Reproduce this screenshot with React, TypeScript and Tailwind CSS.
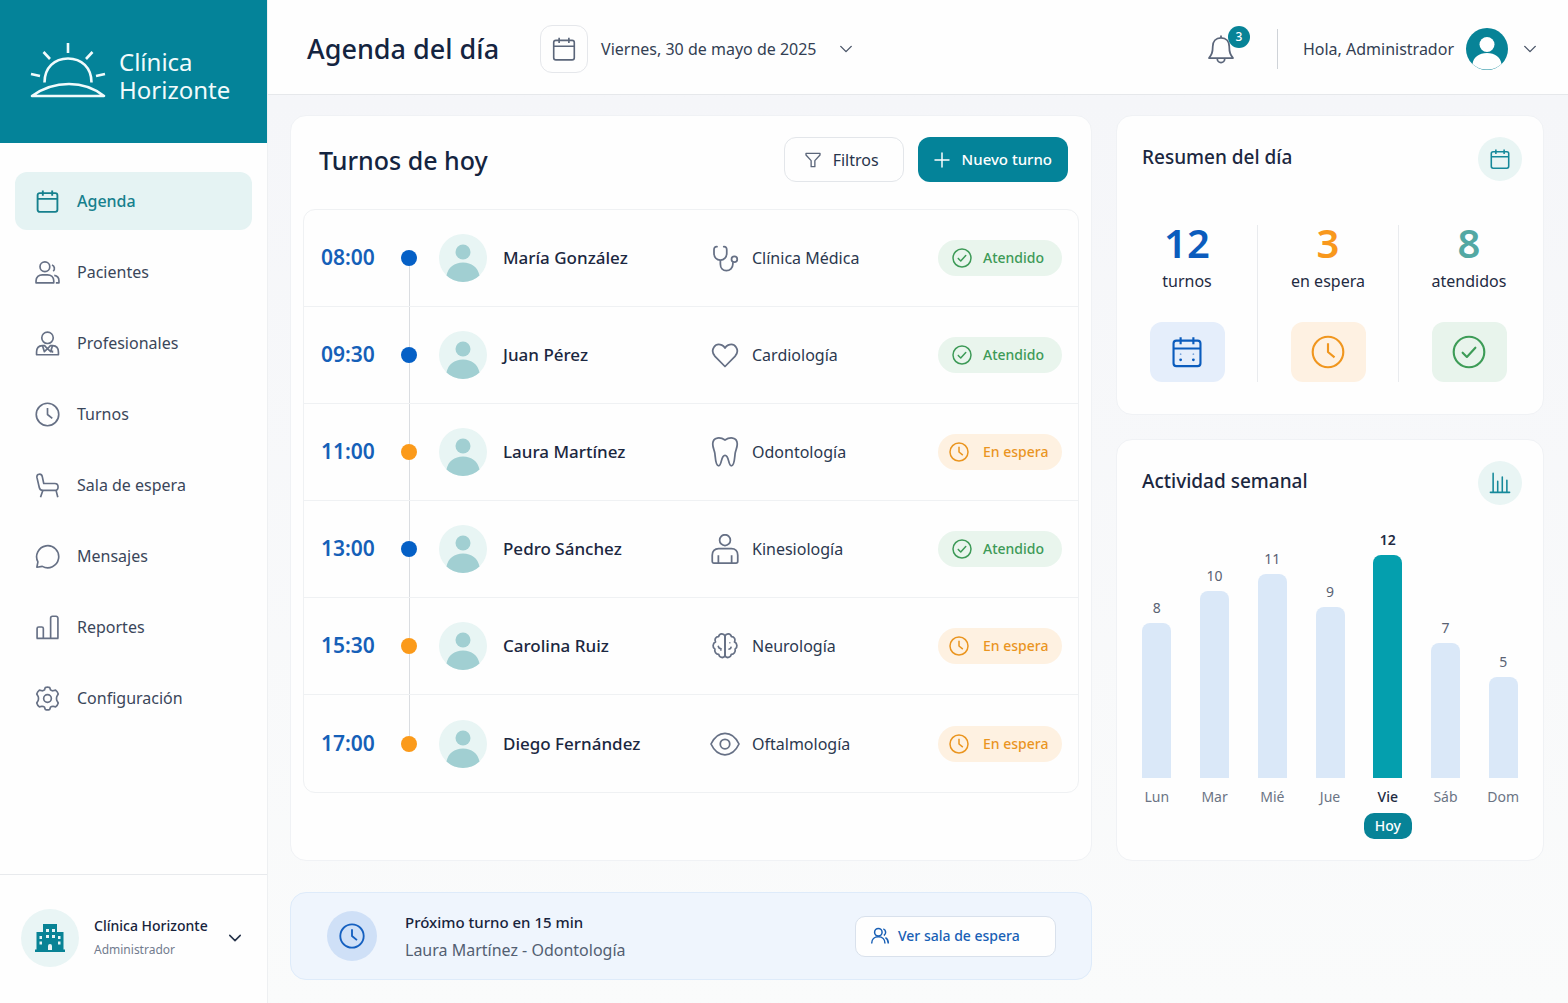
import type { ReactNode } from 'react'
import clsx from 'clsx'

type Status = 'atendido' | 'espera'

const icons: Record<string, ReactNode> = {
  calendar: (
    <>
      <rect x="2.5" y="4" width="19" height="18" rx="2" />
      <path d="M2.5 9.5h19M7.5 1.5v5M16.5 1.5v5" />
    </>
  ),
  calendarDots: (
    <>
      <rect x="2.5" y="4" width="19" height="18" rx="2" />
      <path d="M2.5 9.5h19M7.5 1.5v5M16.5 1.5v5" />
      <path d="M7.5 13.5h.01M16.5 13.5h.01" strokeWidth="1.2" opacity=".5" strokeLinecap="round" />
      <path d="M7.5 17.5h.01M16.5 17.5h.01" strokeWidth="2" strokeLinecap="round" />
    </>
  ),
  users: (
    <>
      <circle cx="9.5" cy="6.5" r="4.7" />
      <path d="M1 22v-2c0-3.6 2.7-5.8 6-5.8h5c3.3 0 6 2.2 6 5.8v2z" />
      <path d="M16.3 4.8a3.6 3.6 0 0 1 1.2 6M18.5 14.8c2.7.4 4.5 2.3 4.5 5.2v2h-3" />
    </>
  ),
  waiting: (
    <>
      <circle cx="10" cy="7.5" r="4.5" />
      <path d="M2 21c0-5 3.3-8 8-8s8 3 8 8M16 3.5c3.5 1.3 3.7 6.2.6 7.9M18.5 14c2.3 1.3 3.5 3.7 3.5 7" />
    </>
  ),
  doctor: (
    <>
      <circle cx="12" cy="6.5" r="5.5" />
      <path d="M1.5 22.8v-2.600c0-3.700 2.200-6 5.500-6.200l2.200 0 2.800 3 2.800-3 2.200 0c3.300.2 5.500 2.500 5.500 6.200v2.600z" />
      <path d="M7.200 14.200l1.800 5.600 3-2.800 3 2.800 1.800-5.600M16.700 18.800v2" />
    </>
  ),
  clock: (
    <>
      <circle cx="12" cy="12" r="10.8" />
      <path d="M12 5.800V12l4.600 3.800" />
    </>
  ),
  chair: (
    <>
      <path d="M1.800 4C1.600.4 6.300.2 7 3.500l1.400 6.600H19c4.200 0 4.200 6.600 0 6.600H7.600c-2 0-3.100-1-3.500-2.800z" />
      <path d="M7.500 16.700l-2.200 6.600M20.200 16.700l1.700 6.600" />
    </>
  ),
  chat: <path d="M1.800 22.300l1-5.100A10.600 10.600 0 1 1 7 21.500z" />,
  bars: <path d="M1.500 22.500h21M2 22.500V13a1.500 1.500 0 0 1 1.500-1.500h3A1.500 1.500 0 0 1 8 13v9.500M15 22.500V3a1.800 1.800 0 0 1 1.800-1.800h3.400A1.800 1.800 0 0 1 22 3v19.500" />,
  gear: (
    <>
      <circle cx="12" cy="12" r="3.7" />
      <path d="M9.900 1.500q2.100-1 4.200 0l.8 2.200q1 .9 2.300.9l2.600-.6q1.900 1.400 2.500 3.700l-1.400 2.500q-.5 1.800 0 3.600l1.400 2.500q-.6 2.300-2.500 3.700l-2.600-.6q-1.300 0-2.300.9l-.8 2.200q-2.100 1-4.200 0l-.8-2.200q-1-.9-2.300-.9l-2.600.6q-1.900-1.400-2.500-3.700l1.400-2.500q.5-1.800 0-3.600L1.700 7.700q.6-2.300 2.500-3.700l2.600.6q1.300 0 2.300-.9z" />
    </>
  ),
  chevron: <path d="M3 7.500l9 9 9-9" strokeLinecap="round" />,
  bell: <path d="M12 3.200V1.200M12 3c-4.200 0-6.600 3-6.600 7 0 5-1 6.500-3 9.200h19.200c-2-2.700-3-4.200-3-9.200 0-4-2.400-7-6.600-7zM9 19.500a3 3.300 0 0 0 6 0" />,
  filter: <path d="M1.500 2h21v2.500L14.800 13v9H9.200v-9L1.500 4.500z" />,
  plus: <path d="M12 1.500v21M1.500 12h21" strokeLinecap="round" />,
  check: (
    <>
      <circle cx="12" cy="12" r="10.8" />
      <path d="M7.500 12.500l3 3 6-6.500" strokeLinecap="round" />
    </>
  ),
  chart: <path d="M1.500 22.200h21M4.500 22V1.500M9.500 22V10M14.500 22V5.500M19.500 22V9" strokeLinecap="round" />,
  stethoscope: (
    <>
      <path d="M6.200 3c-2.400-.4-3 .8-3 2.400v2.700c0 3.300 2.100 5.500 5.100 5.500s5.100-2.200 5.100-5.500V5.400c0-1.600-.6-2.800-3-2.400" />
      <path d="M8.300 13.600v3.200c0 3.200 2 5.300 4.800 5.300s5.200-2.100 5.200-5.300v-1.500" />
      <circle cx="19.500" cy="13" r="2.300" />
    </>
  ),
  heart: <path d="M12 21.200L4 13.100C-.4 8 4.200 1.700 9.500 4.100c1.100.5 1.900 1.300 2.500 2.300.6-1 1.400-1.800 2.500-2.300C19.800 1.700 24.400 8 20 13.100z" />,
  tooth: <path d="M12 2.400C8.500.1 2.400-.3 2.200 5.400c-.1 3 1.300 4.900 1.700 7.800.4 3.200.5 9.700 2.900 9.800 2.900.1 1.700-8.400 5.200-8.400s2.300 8.500 5.200 8.400c2.400-.1 2.500-6.600 2.900-9.800.4-2.900 1.800-4.800 1.700-7.800-.2-5.700-6.300-5.300-9.800-3z" />,
  body: (
    <>
      <circle cx="12" cy="4.900" r="4.300" />
      <path d="M6.800 11.700h10.400c3 0 5 2.200 5 5.200v4.900c0 .9-.5 1.400-1.400 1.400H3.200c-.9 0-1.400-.5-1.400-1.400v-4.900c0-3 2-5.200 5-5.200zM6.700 23v-6M17.300 23v-6" />
    </>
  ),
  brain: (
    <>
      <path d="M12 4c-.9-2.300-4.500-2.200-5.100.4-2.500 0-3.500 2.500-2.500 4.300-2.400 1.100-2.500 4.600-.5 5.700-.5 2.300.9 4.200 3.100 4.300.6 2.900 4.100 3.300 5 1z" />
      <path d="M12 4c.9-2.300 4.500-2.200 5.100.4 2.500 0 3.500 2.500 2.500 4.300 2.400 1.100 2.500 4.600.5 5.700.5 2.300-.9 4.200-3.100 4.300-.6 2.900-4.100 3.300-5 1z" />
      <path d="M6.500 11.800c.3 1.700 1.400 2.500 2.900 2.300M8.700 14.200v1.600M17 12.500c-.2 1.400-1 2.100-2.300 2.100M15.500 9.400h.8" strokeWidth="1.200" />
    </>
  ),
  eye: (
    <>
      <path d="M.8 12C3 7.300 7 3.400 12 3.400S21 7.300 23.200 12C21 16.700 17 20.600 12 20.600S3 16.700.8 12z" />
      <circle cx="12" cy="12" r="3.8" />
    </>
  ),
}

function Icon({ name, className, stroke = 1.5 }: { name: string; className?: string; stroke?: number }) {
  return (
    <svg
      viewBox="0 0 24 24"
      fill="none"
      stroke="currentColor"
      strokeWidth={stroke}
      strokeLinejoin="round"
      className={clsx('shrink-0', className)}
      aria-hidden="true"
    >
      {icons[name]}
    </svg>
  )
}

const nav = [
  { label: 'Agenda', icon: 'calendar' },
  { label: 'Pacientes', icon: 'users' },
  { label: 'Profesionales', icon: 'doctor' },
  { label: 'Turnos', icon: 'clock' },
  { label: 'Sala de espera', icon: 'chair' },
  { label: 'Mensajes', icon: 'chat' },
  { label: 'Reportes', icon: 'bars' },
  { label: 'Configuración', icon: 'gear' },
]

const turnos: { hora: string; paciente: string; especialidad: string; icon: string; status: Status }[] = [
  { hora: '08:00', paciente: 'María González', especialidad: 'Clínica Médica', icon: 'stethoscope', status: 'atendido' },
  { hora: '09:30', paciente: 'Juan Pérez', especialidad: 'Cardiología', icon: 'heart', status: 'atendido' },
  { hora: '11:00', paciente: 'Laura Martínez', especialidad: 'Odontología', icon: 'tooth', status: 'espera' },
  { hora: '13:00', paciente: 'Pedro Sánchez', especialidad: 'Kinesiología', icon: 'body', status: 'atendido' },
  { hora: '15:30', paciente: 'Carolina Ruiz', especialidad: 'Neurología', icon: 'brain', status: 'espera' },
  { hora: '17:00', paciente: 'Diego Fernández', especialidad: 'Oftalmología', icon: 'eye', status: 'espera' },
]

const resumen = [
  { value: 12, label: 'turnos', icon: 'calendarDots', color: 'text-[#0b5cbd]', tile: 'bg-[#e5eefb] text-[#0b5cbd]' },
  { value: 3, label: 'en espera', icon: 'clock', color: 'text-[#f8981d]', tile: 'bg-[#fef1e2] text-[#f0961e]' },
  { value: 8, label: 'atendidos', icon: 'check', color: 'text-[#53a8a3]', tile: 'bg-[#e8f4ec] text-[#3d9c57]' },
]

const semana = [
  { day: 'Lun', count: 8, height: 155 },
  { day: 'Mar', count: 10, height: 187 },
  { day: 'Mié', count: 11, height: 204 },
  { day: 'Jue', count: 9, height: 171 },
  { day: 'Vie', count: 12, height: 223, today: true },
  { day: 'Sáb', count: 7, height: 135 },
  { day: 'Dom', count: 5, height: 101 },
]

function Logo() {
  return (
    <svg viewBox="0 0 76 58" className="w-[76px] h-[58px] shrink-0" fill="none" stroke="currentColor" strokeWidth="2.6" aria-hidden="true">
      <path d="M38 0v10M13.500 9l6.500 7M62.500 9l-6.500 7M1 31l9 2M75 31l-9 2" />
      <path d="M14.500 39.500c0-15 10-24 23.500-24s23.500 9 23.500 24" />
      <path d="M2 53c11-8 23-12 37-12s25 4 35 12z" strokeLinejoin="round" />
    </svg>
  )
}

function Building() {
  return (
    <svg viewBox="0 0 30 28" className="w-[30px] h-7" aria-hidden="true">
      <path fill="#098395" d="M8 0h14v8h6.500v17.500H30V28H0v-2.500h1.500V8H8z" />
      <path
        fill="#e9f5f5"
        d="M11 5h3v3h-3zM17 5h3v3h-3zM11 11h3v3h-3zM17 11h3v3h-3zM4.500 12H7v3H4.500zM4.500 17.500H7v3H4.500zM23 12h2.500v3H23zM23 17.500h2.500v3H23zM13 26v-4a2 2 0 0 1 4 0v4z"
      />
    </svg>
  )
}

function PatientAvatar() {
  return (
    <svg viewBox="0 0 48 48" className="w-12 h-12 shrink-0" aria-hidden="true">
      <circle cx="24" cy="24" r="24" fill="#e8f5f4" />
      <circle cx="24" cy="18" r="7.5" fill="#a1cfd2" />
      <path fill="#a1cfd2" d="M7.500 41.500C9 33.500 15.500 28.500 24 28.500s15 5 16.500 13A24 24 0 0 1 24 48a24 24 0 0 1-16.500-6.500z" />
    </svg>
  )
}

function AdminAvatar() {
  return (
    <svg viewBox="0 0 42 42" className="w-[42px] h-[42px] shrink-0" aria-hidden="true">
      <circle cx="21" cy="21" r="21" fill="#078397" />
      <circle cx="21" cy="16.5" r="7.5" fill="#fff" />
      <path fill="#fff" d="M6.500 36C7.500 29 13 25 21 25s13.500 4 14.500 11A21 21 0 0 1 21 41.500 21 21 0 0 1 6.500 36z" />
    </svg>
  )
}

function StatusBadge({ status }: { status: Status }) {
  const done = status === 'atendido'
  return (
    <span
      className={clsx(
        'flex items-center w-[124px] h-9 rounded-full text-sm font-medium shrink-0',
        done ? 'pl-[14px] gap-[11px] bg-[#e9f5ed] text-[#3d9a57]' : 'pl-[11px] gap-[14px] bg-[#fef1e1] text-[#ea951f]',
      )}
    >
      <Icon name={done ? 'check' : 'clock'} className="w-5 h-5" stroke={1.8} />
      {done ? 'Atendido' : 'En espera'}
    </span>
  )
}

function Sidebar() {
  return (
    <aside className="w-[268px] shrink-0 flex flex-col bg-[#fefefe] border-r border-[#eef0f2]">
      <div className="h-[143px] flex items-center gap-[13px] pl-[30px] bg-[#048399] text-[#f1fbfc]">
        <Logo />
        <p className="text-2xl leading-7 mt-2">
          Clínica
          <br />
          Horizonte
        </p>
      </div>
      <nav className="flex-1 flex flex-col gap-[13px] px-[15px] pt-[29px]">
        {nav.map((item, i) => (
          <a
            key={item.label}
            href="#"
            aria-current={i === 0 ? 'page' : undefined}
            className={clsx(
              'flex items-center gap-[17px] h-[58px] pl-5 rounded-xl text-base',
              i === 0 ? 'bg-[#e5f3f3] text-[#16808d] font-medium' : 'text-[#3a465a] hover:bg-slate-50',
            )}
          >
            <Icon name={item.icon} className={clsx('w-[25px] h-[25px]', i > 0 && 'text-[#667085]')} stroke={i === 0 ? 1.8 : 1.6} />
            {item.label}
          </a>
        ))}
      </nav>
      <button className="flex items-center h-[130px] px-[21px] pb-1 border-t border-[#e8eaed] text-left">
        <span className="grid place-items-center w-[58px] h-[58px] rounded-full bg-[#e9f5f5]">
          <Building />
        </span>
        <span className="flex-1 ml-[15px]">
          <span className="block text-sm leading-6 font-medium text-[#17233c]">Clínica Horizonte</span>
          <span className="block text-xs leading-6 text-[#727c8e]">Administrador</span>
        </span>
        <Icon name="chevron" className="w-[14px] h-[14px] mr-1 text-[#26334a]" stroke={2.6} />
      </button>
    </aside>
  )
}

function Header() {
  return (
    <header className="flex items-center h-[95px] pt-1 pl-[39px] pr-[31px] bg-[#fefefe] border-b border-[#e6e8eb] text-[#333f53]">
      <h1 className="text-[27px] font-medium text-[#142440]">Agenda del día</h1>
      <button className="ml-[41px] flex items-center" aria-label="Cambiar fecha">
        <span className="grid place-items-center w-12 h-12 rounded-xl border border-[#e5e7eb]">
          <Icon name="calendar" className="w-[26px] h-[26px] text-[#5b667a]" stroke={1.5} />
        </span>
        <span className="ml-[13px] mr-[22px] text-base">Viernes, 30 de mayo de 2025</span>
        <Icon name="chevron" className="w-[14px] h-[14px] text-[#4a5568]" stroke={2.4} />
      </button>
      <button className="relative ml-auto" aria-label="Notificaciones">
        <Icon name="bell" className="w-[30px] h-[30px] text-[#5b667a]" stroke={1.4} />
        <span className="absolute -top-2 -right-[14px] grid place-items-center w-[22px] h-[22px] rounded-full bg-[#078397] text-white text-xs font-medium">
          3
        </span>
      </button>
      <span className="w-px h-10 ml-[41px] mr-[25px] bg-[#cfd3d8]" />
      <button className="flex items-center text-base">
        Hola, Administrador
        <span className="ml-3 mr-[15px]">
          <AdminAvatar />
        </span>
        <Icon name="chevron" className="w-[14px] h-[14px] text-[#4a5568]" stroke={2.4} />
      </button>
    </header>
  )
}

function TurnosCard() {
  return (
    <section className="flex-1 px-3 pt-[21px] bg-[#fefefe] rounded-2xl border border-[#f0f2f5]">
      <div className="flex items-center gap-[14px] pl-4 pr-[11px]">
        <h2 className="flex-1 text-[25px] leading-9 font-medium text-[#142440]">Turnos de hoy</h2>
        <button className="flex items-center gap-3 h-[45px] px-5 rounded-xl border border-[#e3e6ea] text-base text-[#28354b]">
          <Icon name="filter" className="w-4 h-4 text-[#5b667a]" stroke={2} />
          <span className="mr-1">Filtros</span>
        </button>
        <button className="flex items-center gap-3 h-[45px] px-4 rounded-xl bg-[#048399] text-[15px] font-medium text-white">
          <Icon name="plus" className="w-4 h-4" stroke={2.2} />
          Nuevo turno
        </button>
      </div>
      <ol className="mt-[27px] rounded-xl border border-[#eff1f3] divide-y divide-[#eff1f3]">
        {turnos.map((t, i) => (
          <li key={t.hora} className="flex items-center h-[97px] pl-[17px] pr-4">
            <time className="w-20 text-[21px] font-semibold text-[#1560b8]">{t.hora}</time>
            <span className="self-stretch flex flex-col items-center w-4 mr-[22px]">
              <span className={clsx('flex-1 w-px', i > 0 && 'bg-[#dadde1]')} />
              <span className={clsx('w-4 h-4 rounded-full', t.status === 'atendido' ? 'bg-[#0560c6]' : 'bg-[#fb9a1a]')} />
              <span className={clsx('flex-1 w-px', i < turnos.length - 1 && 'bg-[#dadde1]')} />
            </span>
            <PatientAvatar />
            <span className="w-[207px] ml-4 text-[17px] font-medium text-[#1b2740]">{t.paciente}</span>
            <Icon name={t.icon} className="w-[30px] h-[30px] mr-3 text-[#667085]" stroke={1.4} />
            <span className="flex-1 text-base text-[#2b384f]">{t.especialidad}</span>
            <StatusBadge status={t.status} />
          </li>
        ))}
      </ol>
    </section>
  )
}

function SideCardHeader({ title, icon }: { title: string; icon: string }) {
  return (
    <div className="flex items-center justify-between px-[5px]">
      <h2 className="mb-1 text-[19px] font-medium text-[#1b2740]">{title}</h2>
      <span className="grid place-items-center w-11 h-11 -mr-1 rounded-full bg-[#e9f5f4] text-[#16899a]">
        <Icon name={icon} className="w-[22px] h-[22px]" stroke={1.7} />
      </span>
    </div>
  )
}

function ResumenCard() {
  return (
    <section className="px-5 pt-[21px] pb-8 bg-[#fefefe] rounded-2xl border border-[#f0f2f5]">
      <SideCardHeader title="Resumen del día" icon="calendar" />
      <div className="flex mt-11 -ml-5 -mr-4 divide-x divide-[#e9ebee]">
        {resumen.map((r) => (
          <div key={r.label} className="flex-1 flex flex-col items-center">
            <span className={clsx('text-[40px] leading-9 font-semibold', r.color)}>{r.value}</span>
            <span className="mt-2 text-base leading-6 text-[#1f2b42]">{r.label}</span>
            <span className={clsx('grid place-items-center w-[75px] h-[60px] mt-[29px] rounded-xl', r.tile)}>
              <Icon name={r.icon} className="w-[34px] h-[34px]" stroke={1.5} />
            </span>
          </div>
        ))}
      </div>
    </section>
  )
}

function ActividadCard() {
  return (
    <section className="flex-1 px-5 pt-[21px] bg-[#fefefe] rounded-2xl border border-[#f0f2f5]">
      <SideCardHeader title="Actividad semanal" icon="chart" />
      <div className="flex items-end h-[273px] -mx-[9px]">
        {semana.map((d) => (
          <div key={d.day} className="flex-1 flex flex-col items-center">
            <span className={clsx('text-sm leading-5 mb-[5px]', d.today ? 'font-semibold text-[#1f2b42]' : 'text-[#596273]')}>{d.count}</span>
            <div className={clsx('w-[29px] rounded-t-lg', d.today ? 'bg-[#049fae]' : 'bg-[#dae8f8]')} style={{ height: d.height }} />
          </div>
        ))}
      </div>
      <div className="flex items-start mt-[7px] -mx-[9px]">
        {semana.map((d) => (
          <div key={d.day} className="flex-1 flex flex-col items-center text-sm leading-6">
            <span className={d.today ? 'font-medium text-[#1f2b42]' : 'text-[#6b7484]'}>{d.day}</span>
            {d.today && <span className="mt-1 px-[11px] leading-[26px] rounded-[10px] bg-[#078397] font-medium text-white">Hoy</span>}
          </div>
        ))}
      </div>
    </section>
  )
}

function NextBanner() {
  return (
    <section className="flex items-center h-[88px] mt-[31px] mr-[452px] pl-9 pr-[35px] rounded-2xl border border-[#deebfa] bg-[#eff5fd]">
      <span className="grid place-items-center w-[50px] h-[50px] rounded-full bg-[#cfe0f7] text-[#1560c0]">
        <Icon name="clock" className="w-[26px] h-[26px]" stroke={1.7} />
      </span>
      <div className="flex-1 ml-7">
        <p className="text-[15px] leading-7 font-medium text-[#17233c]">Próximo turno en 15 min</p>
        <p className="text-base leading-7 text-[#535f72]">Laura Martínez - Odontología</p>
      </div>
      <button className="flex items-center gap-2 w-[201px] h-[41px] pl-[14px] rounded-[10px] border border-[#d9e1ec] bg-[#fefefe] text-sm font-medium text-[#185fb5]">
        <Icon name="waiting" className="w-5 h-5" stroke={1.8} />
        Ver sala de espera
      </button>
    </section>
  )
}

export default function App() {
  return (
    <div className="min-h-screen flex font-['Noto_Sans',sans-serif]">
      <Sidebar />
      <div className="flex-1 min-w-0 flex flex-col">
        <Header />
        <main className="flex-1 pl-[22px] pr-6 pt-5 pb-6 bg-linear-to-b from-[#f5f6f9] to-[#fafbfb]">
          <div className="flex gap-6 min-h-[746px]">
            <TurnosCard />
            <div className="w-[428px] shrink-0 flex flex-col gap-6">
              <ResumenCard />
              <ActividadCard />
            </div>
          </div>
          <NextBanner />
        </main>
      </div>
    </div>
  )
}
